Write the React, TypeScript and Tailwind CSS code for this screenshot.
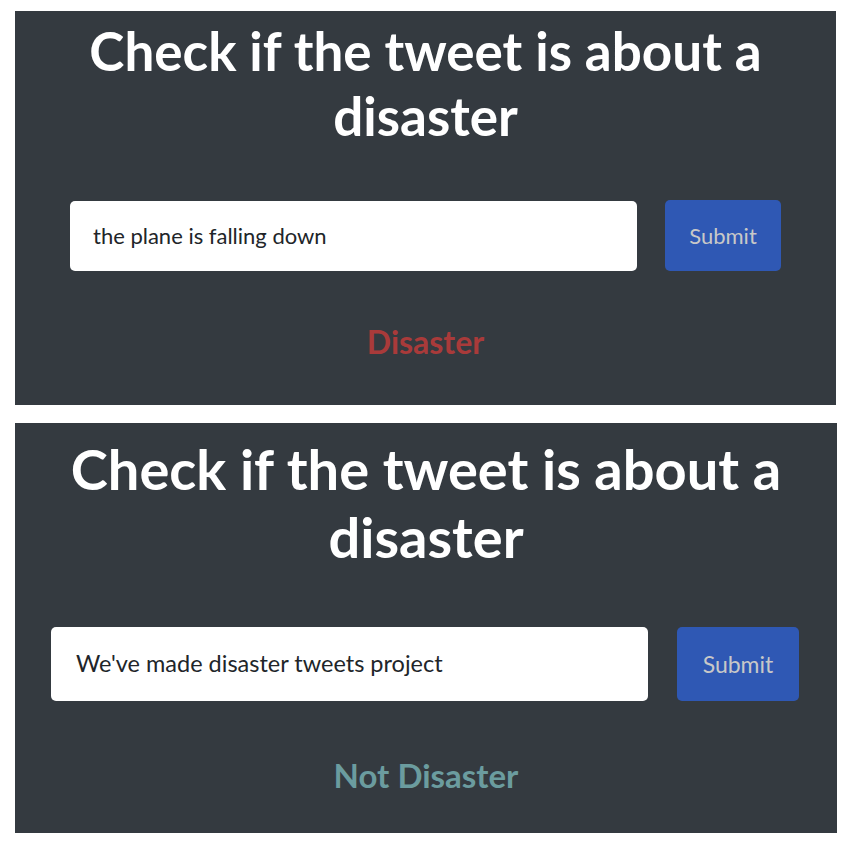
const panels = [
  {
    text: "the plane is falling down",
    result: "Disaster",
    box: "mt-[11px] h-[394px] w-[821px] pt-[7px]",
    heading: "text-[53px] leading-[65px]",
    row: "mt-[52px] px-[55px] gap-[28px]",
    input: "h-[70px] pl-[23px] text-[22px]",
    button: "h-[71px] w-[116px] text-[22px]",
    resultCls: "mt-[55px] text-[32px] text-[#a93a3a]",
  },
  {
    text: "We've made disaster tweets project",
    result: "Not Disaster",
    box: "mt-[18px] h-[410px] w-[822px] pt-[12px]",
    heading: "text-[56px] leading-[68px]",
    row: "mt-[56px] pl-[36px] pr-[38px] gap-[29px]",
    input: "h-[74px] pl-[25px] text-[23.5px]",
    button: "h-[74px] w-[122px] text-[23px]",
    resultCls: "mt-[58px] text-[33px] text-[#6b9c9f]",
  },
];

export default function App() {
  return (
    <div className="min-h-[852px] bg-white pl-[15px]" style={{ fontFamily: "Lato, 'Open Sans', sans-serif" }}>
      {panels.map((p) => (
        <div key={p.result} className={`${p.box} bg-[#343a40] flex flex-col`}>
          <h1 className={`${p.heading} font-bold text-white text-center`}>
            Check if the tweet is about a
            <br />
            disaster
          </h1>
          <div className={`${p.row} flex items-center`}>
            <div className={`${p.input} flex-1 bg-white rounded-[5px] flex items-center text-[#212529]`}>
              {p.text}
            </div>
            <div className={`${p.button} bg-[#2f58b4] rounded-[5px] flex items-center justify-center text-[#c8c8c8]`}>
              Submit
            </div>
          </div>
          <div className={`${p.resultCls} font-bold text-center leading-none`}>{p.result}</div>
        </div>
      ))}
    </div>
  );
}
